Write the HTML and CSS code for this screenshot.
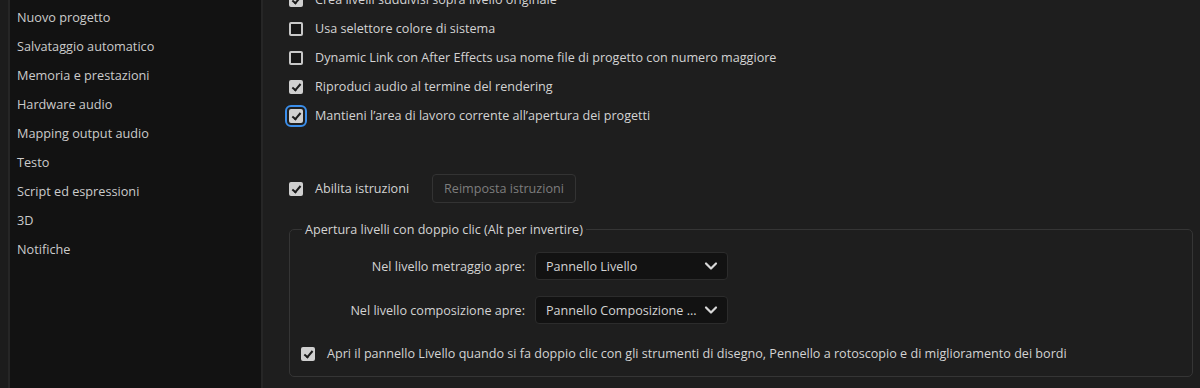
FILE: index.html
```html
<!DOCTYPE html>
<html lang="it">
<head>
<meta charset="utf-8">
<title>Preferenze</title>
<link rel="stylesheet" href="styles.css">
</head>
<body>
<div class="window">
  <div class="edge"></div>
  <nav class="sidebar">
    <div class="nav-item">Nuovo progetto</div>
    <div class="nav-item">Salvataggio automatico</div>
    <div class="nav-item">Memoria e prestazioni</div>
    <div class="nav-item">Hardware audio</div>
    <div class="nav-item">Mapping output audio</div>
    <div class="nav-item">Testo</div>
    <div class="nav-item">Script ed espressioni</div>
    <div class="nav-item">3D</div>
    <div class="nav-item">Notifiche</div>
  </nav>
  <main class="main">
    <div class="options">
      <label class="row"><span class="cb checked"></span><span>Crea livelli suddivisi sopra livello originale</span></label>
      <label class="row"><span class="cb"></span><span>Usa selettore colore di sistema</span></label>
      <label class="row"><span class="cb"></span><span>Dynamic Link con After Effects usa nome file di progetto con numero maggiore</span></label>
      <label class="row"><span class="cb checked"></span><span>Riproduci audio al termine del rendering</span></label>
      <label class="row"><span class="cb checked focus"></span><span>Mantieni l’area di lavoro corrente all’apertura dei progetti</span></label>
    </div>
    <div class="tips">
      <label class="row"><span class="cb checked"></span><span>Abilita istruzioni</span></label>
      <button class="btn">Reimposta istruzioni</button>
    </div>
    <fieldset class="group">
      <legend>Apertura livelli con doppio clic (Alt per invertire)</legend>
      <div class="form">
        <span class="flabel">Nel livello metraggio apre:</span>
        <div class="select"><span>Pannello Livello</span><svg class="chev" viewBox="0 0 14 10" width="14" height="10"><path d="M2 2.5 L7 7.5 L12 2.5" fill="none" stroke="#d8d8d8" stroke-width="2.2" stroke-linecap="round" stroke-linejoin="round"/></svg></div>
        <span class="flabel">Nel livello composizione apre:</span>
        <div class="select"><span>Pannello Composizione ...</span><svg class="chev" viewBox="0 0 14 10" width="14" height="10"><path d="M2 2.5 L7 7.5 L12 2.5" fill="none" stroke="#d8d8d8" stroke-width="2.2" stroke-linecap="round" stroke-linejoin="round"/></svg></div>
      </div>
      <label class="row last"><span class="cb checked"></span><span>Apri il pannello Livello quando si fa doppio clic con gli strumenti di disegno, Pennello a rotoscopio e di miglioramento dei bordi</span></label>
    </fieldset>
  </main>
</div>
</body>
</html>
```

FILE: styles.css
```css
* { box-sizing: border-box; }
html, body { margin: 0; padding: 0; }
body {
  width: 1200px;
  height: 388px;
  overflow: hidden;
  background: #1e1e1e;
  font-family: "Open Sans", "Noto Sans", sans-serif;
  font-size: 12.6px;
  color: #d3d3d3;
}
.window {
  display: flex;
  height: 388px;
}
.edge {
  width: 10px;
  background: #1c1c1c;
  border-right: 2px solid #262626;
  flex: none;
}
.sidebar {
  width: 253px;
  flex: none;
  background: #121212;
  border-right: 2px solid #262626;
  padding-top: 3px;
}
.nav-item {
  height: 29px;
  line-height: 29px;
  padding-left: 7px;
  color: #cbcbcb;
  font-size: 12.7px;
}
.main {
  flex: 1;
  padding-left: 26px;
  padding-right: 7px;
}
.options {
  margin-top: -15px;
}
.row {
  display: flex;
  align-items: center;
  height: 29px;
  gap: 12px;
}
.cb {
  width: 14px;
  height: 14px;
  flex: none;
  border: 2px solid #c8c8c8;
  border-radius: 2px;
  background: #161616;
  position: relative;
}
.cb.checked {
  background: #cfcfcf;
  border-color: #cfcfcf;
}
.cb.checked::after {
  content: "";
  position: absolute;
  left: 3px;
  top: 0px;
  width: 3px;
  height: 7px;
  border-right: 2px solid #1a1a1a;
  border-bottom: 2px solid #1a1a1a;
  transform: rotate(40deg);
}
.cb.focus {
  outline: 2px solid #3b8eea;
  outline-offset: 2px;
}
.tips {
  display: flex;
  align-items: center;
  margin-top: 44px;
  gap: 23px;
}
.btn {
  font: inherit;
  height: 29px;
  padding: 0 11px;
  background: #1e1e1e;
  color: #7d7d7d;
  border: 1px solid #333;
  border-radius: 4px;
}
.group {
  margin: 18px 0 0 0;
  border: 1px solid #353535;
  border-radius: 5px;
  padding: 14px 0 8px 11px;
}
.group legend {
  padding: 0 3px;
  margin-left: 1px;
  color: #d3d3d3;
}
.form {
  display: grid;
  grid-template-columns: 224px 193px;
  column-gap: 10px;
  row-gap: 16px;
  align-items: center;
}
.flabel {
  text-align: right;
}
.select {
  height: 28px;
  background: #121212;
  border: 1px solid #2c2c2c;
  border-radius: 4px;
  display: flex;
  align-items: center;
  justify-content: space-between;
  padding: 0 9px 0 10px;
}
.chev { flex: none; }
.row.last {
  margin-top: 15px;
}
```
